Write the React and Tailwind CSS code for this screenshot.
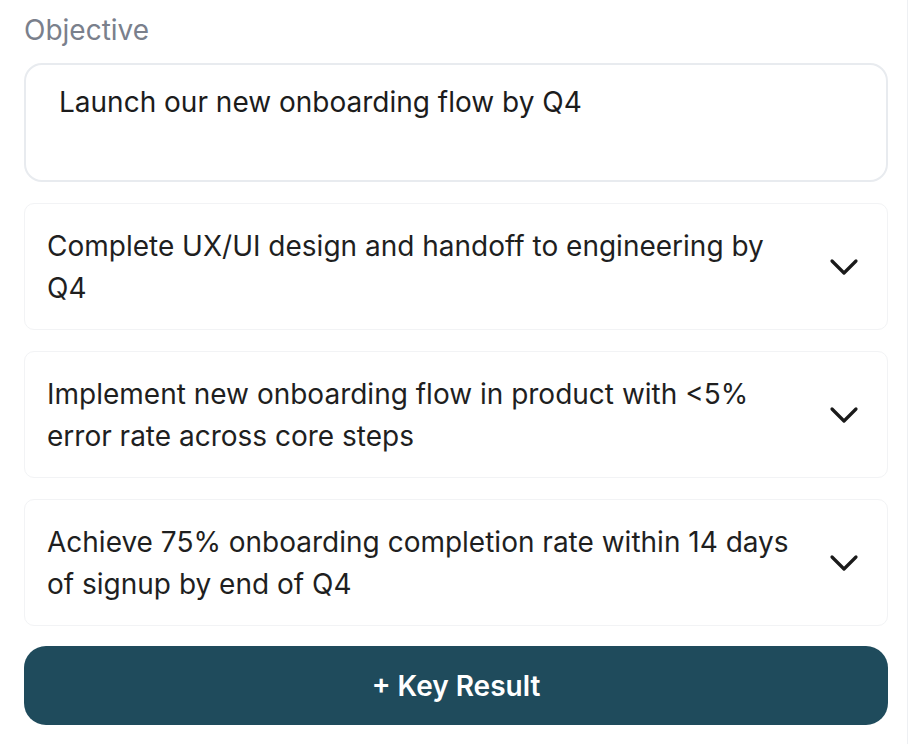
import React from "react";

const Chevron = () => (
  <svg width="30" height="18" viewBox="0 0 30 18" fill="none" className="shrink-0">
    <path d="M3 3 L15 15 L27 3" stroke="#1a1a1a" strokeWidth="3.2" strokeLinecap="round" strokeLinejoin="round" />
  </svg>
);

const results = [
  "Complete UX/UI design and handoff to engineering by Q4",
  "Implement new onboarding flow in product with <5% error rate across core steps",
  "Achieve 75% onboarding completion rate within 14 days of signup by end of Q4",
];

export default function App() {
  return (
    <div className="w-[908px] min-h-[744px] border-r border-[#eef0f3] bg-white" style={{ fontFamily: "Inter, 'Noto Sans', sans-serif" }}>
      <div className="w-[888px] pl-6 pt-[12px] flex flex-col">
        <div className="text-[28px] leading-[36px] text-[#7a808c]">Objective</div>
        <div className="mt-[15px] h-[119px] rounded-[18px] border-2 border-[#e8ebef] pl-[33px] pt-[19px] text-[28px] leading-[36px] text-[#1c1c1c]">
          Launch our new onboarding flow by Q4
        </div>
        <div className="mt-[21px] flex flex-col gap-[21px]">
          {results.map((r) => (
            <div key={r} className="h-[127px] rounded-[10px] border border-[#f2f3f5] pl-[22px] pr-[28px] flex items-center justify-between gap-[30px]">
              <div className="flex-1 text-[28px] leading-[42px] text-[#1f1f1f]">{r}</div>
              <Chevron />
            </div>
          ))}
        </div>
        <button className="mt-[20px] h-[79px] rounded-[22px] bg-[#1f4b5c] text-white text-[28px] font-semibold">
          + Key Result
        </button>
      </div>
    </div>
  );
}
